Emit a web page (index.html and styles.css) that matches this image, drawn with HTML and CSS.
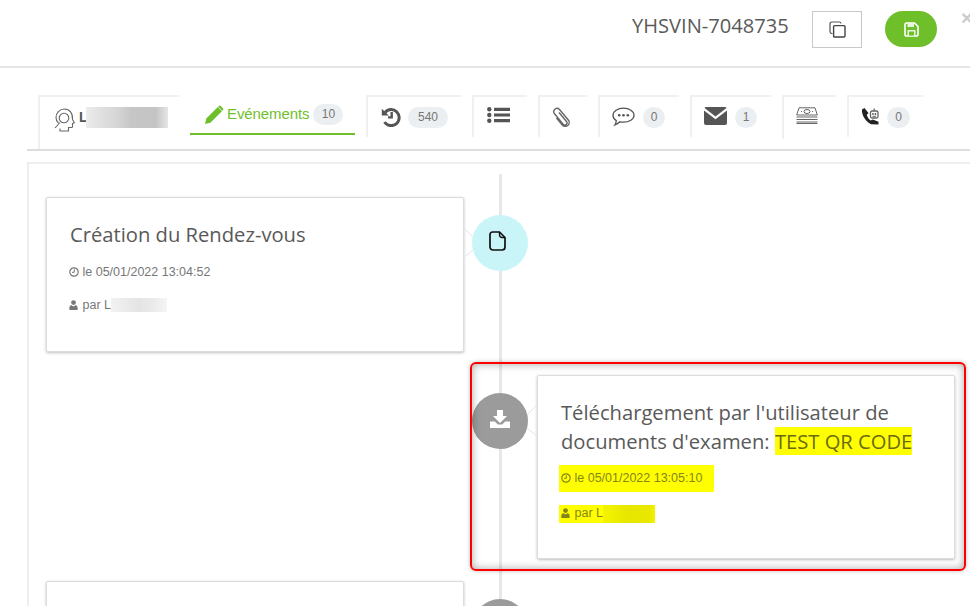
FILE: index.html
```html
<!DOCTYPE html>
<html lang="fr">
<head>
<meta charset="utf-8">
<title>YHSVIN-7048735</title>
<link rel="stylesheet" href="styles.css">
</head>
<body>
<header class="top">
  <span class="ref">YHSVIN-7048735</span>
  <button class="copy" aria-label="Copier"><svg width="17" height="17" viewBox="0 0 17 17"><path d="M3.500 12.500H2.800A1.800 1.800 0 0 1 1 10.700V2.800A1.800 1.800 0 0 1 2.800 1h7.400A1.800 1.800 0 0 1 12 2.500" fill="none" stroke="#555" stroke-width="1.200"/><rect x="4.600" y="4.600" width="11.400" height="11.400" rx="1" fill="#fff" stroke="#444" stroke-width="1.400"/></svg></button>
  <button class="save" aria-label="Enregistrer"><svg width="15" height="15" viewBox="0 0 15 15"><path d="M1 2.500A1.500 1.500 0 0 1 2.500 1h8L14 4.500v8a1.500 1.500 0 0 1-1.500 1.500h-10A1.500 1.500 0 0 1 1 12.500z" fill="none" stroke="#fff" stroke-width="1.600"/><path d="M3.500 1.500h6.500v3.500H3.500zM3.500 8h8v5.500h-8z" fill="#fff" fill-opacity=".85"/><path d="M5 9.500h5v4H5z" fill="#6fbf2b"/></svg></button>
  <span class="close">×</span>
</header>

<nav class="tabs">
  <div class="tab t-user">
    <svg class="i-user" width="22" height="24" viewBox="0 0 22 24" fill="none" stroke="#666" stroke-width="1.100"><path d="M6 20.500v2.500h8.500v-3.500h3a1 1 0 0 0 1-1v-3l1.800-.8-1.800-3.200C19 5 15.500 1 10.500 1 5.500 1 2 5 2 9.500c0 2.300 1 4.300 2.500 5.500"/><circle cx="10" cy="10" r="4.800"/><path d="M6 14.500 1 20"/></svg>
    <b class="uname">L</b><span class="blur blur-name"></span>
  </div>
  <div class="tab t-events">
    <svg width="20" height="20" viewBox="0 0 20 20"><path d="M1 19l1.300-5.400L13.800 2.100l4.100 4.100L6.400 17.700zM14.800 1.100a1.400 1.400 0 0 1 2 0l2.100 2.100a1.400 1.400 0 0 1 0 2l-.6.600-4.100-4.100z" fill="#6fbf2b"/></svg>
    <span class="tab-label">Evénements</span><span class="badge b-ev">10</span>
  </div>
  <div class="tab t-hist">
    <svg width="20" height="20" viewBox="0 0 20 20"><path d="M4 5.500A8 8 0 1 1 3.500 15" fill="none" stroke="#555" stroke-width="3"/><path d="M.8 1.800 7.800 8.500H.8zM9.500 5h2.400v6.500H7v-2.300h2.500z" fill="#555"/></svg>
    <span class="badge b-hist">540</span>
  </div>
  <div class="tab t-list">
    <svg width="23" height="16" viewBox="0 0 23 16" fill="#555"><circle cx="2.300" cy="2.300" r="2.200"/><circle cx="2.300" cy="8" r="2.200"/><circle cx="2.300" cy="13.700" r="2.200"/><path d="M7 .8h16v3.200H7zM7 6.400h16v3.200H7zM7 12h16v3.200H7z"/></svg>
  </div>
  <div class="tab t-clip">
    <svg width="19" height="20" viewBox="0 0 19 20" fill="none" stroke="#666" stroke-width="1.400"><path d="M7 5.500l7.500 9a2.200 2.200 0 0 1-3.400 2.800L2.500 6.800A3.300 3.300 0 0 1 7.500 2.500l8.800 10.500a3.900 3.900 0 0 1-6 5L4.500 11"/></svg>
  </div>
  <div class="tab t-chat">
    <svg width="23" height="20" viewBox="0 0 23 20"><path d="M11.500 1.200c5.700 0 10.500 3 10.500 7s-4.800 7-10.500 7c-1.300 0-2.600-.1-3.700-.4-1.200 1.300-2.800 2.400-5 3.200.9-1.300 1.500-2.600 1.500-4.400C2.300 12.400 1 10.400 1 8.200c0-4 4.800-7 10.500-7z" fill="none" stroke="#555" stroke-width="1.300"/><circle cx="7.200" cy="8.200" r="1.300" fill="#555"/><circle cx="11.500" cy="8.200" r="1.300" fill="#555"/><circle cx="15.800" cy="8.200" r="1.300" fill="#555"/></svg>
    <span class="badge b-round">0</span>
  </div>
  <div class="tab t-mail">
    <svg width="23" height="18" viewBox="0 0 23 18" fill="#555"><path d="M2 0h19a2 2 0 0 1 1.500 1L11.500 9.500.5 1A2 2 0 0 1 2 0zM0 3.500l11.500 8.700L23 3.500V16a2 2 0 0 1-2 2H2a2 2 0 0 1-2-2z"/></svg>
    <span class="badge b-round">1</span>
  </div>
  <div class="tab t-money">
    <svg width="22" height="17" viewBox="0 0 22 17" fill="none" stroke="#666"><path d="M3 .8h16l2.300 7.200H.7z"/><ellipse cx="11" cy="4.500" rx="3" ry="2"/><path d="M.500 10h21M.500 12.500h21M.500 15h21M.500 16.500h21"/><path d="M5 4.500h1M16 4.500h1"/></svg>
  </div>
  <div class="tab t-phone">
    <svg width="19" height="18" viewBox="0 0 19 18"><path d="M3.500 1 1 2.500C.3 7.500 4.500 14.500 10 17.200l7.500.3v-2.800l-5.700-2.200-2 1C8 12.500 6 9.500 5.800 7.500l1.800-1.300z" fill="#222"/><rect x="9.500" y="4" width="7.500" height="7" rx="1.500" fill="none" stroke="#666" stroke-width="1.300"/><circle cx="12" cy="7" r=".9" fill="#555"/><circle cx="14.500" cy="7" r=".9" fill="#555"/><path d="M13.200 1.500V4" stroke="#666" stroke-width="1.300"/><path d="M11.500 9.300h3.500" stroke="#666"/></svg>
    <span class="badge b-round">0</span>
  </div>
</nav>

<main class="timeline">
  <article class="event">
    <section class="card">
      <h2 class="title">Création du Rendez-vous</h2>
      <p class="meta m-date"><svg class="mi" width="10" height="10" viewBox="0 0 10 10" fill="none" stroke="currentColor"><circle cx="5" cy="5" r="4.200" stroke-width="1.200"/><path d="M5.300 2.300v3H3"/></svg> le 05/01/2022 13:04:52</p>
      <p class="meta m-by"><svg class="mi" width="9" height="10" viewBox="0 0 9 10" fill="currentColor"><circle cx="4.500" cy="2.600" r="2.400"/><path d="M.2 9.100C.2 6.500 1.200 5.300 2.300 5a3 3 0 0 0 4.400 0c1.100.3 2.100 1.500 2.100 4.100 0 .6-.4.900-.9.900H1.100C.6 10 .2 9.700.2 9.100z"/></svg> par L<span class="blur blur-by"></span></p>
    </section>
    <div class="node node-file">
      <svg class="notch notch-l" width="10" height="32" viewBox="0 0 10 32" fill="none" stroke="#e4e4e4"><path d="M0 0l10 10M0 31l10-8"/></svg>
      <svg class="ico-file" width="17" height="20" viewBox="0 0 17 20" fill="none" stroke="#111" stroke-width="1.700"><path d="M3.500 1H10.500L16 6.500V16a3 3 0 0 1-3 3H4a3 3 0 0 1-3-3V3.500A2.500 2.500 0 0 1 3.500 1z"/><path d="M10.500 1v3a2.500 2.500 0 0 0 2.500 2.500h3" stroke-width="1.400"/></svg>
    </div>
  </article>

  <article class="event">
    <div class="spacer"></div>
    <div class="node node-dl">
      <svg class="notch notch-r" width="10" height="32" viewBox="0 0 10 32" fill="none" stroke="#e4e4e4"><path d="M10 0 0 10M10 31 0 23"/></svg>
      <svg class="ico-dl" width="20" height="18" viewBox="0 0 20 18" fill="#fff"><path d="M7 0h6v6h4l-7 7-7-7h4z"/><path d="M0 11.500h4.800l3 3h4.400l3-3H20V18H0z"/></svg>
    </div>
    <section class="card card-tall">
      <h2 class="title">Téléchargement par l'utilisateur de documents d'examen: <mark class="hl">TEST QR CODE</mark></h2>
      <p class="meta m-date2 on-yellow"><svg class="mi" width="10" height="10" viewBox="0 0 10 10" fill="none" stroke="currentColor"><circle cx="5" cy="5" r="4.200" stroke-width="1.200"/><path d="M5.300 2.300v3H3"/></svg> le 05/01/2022 13:05:10</p>
      <p class="meta m-by2 on-yellow"><svg class="mi" width="9" height="10" viewBox="0 0 9 10" fill="currentColor"><circle cx="4.500" cy="2.600" r="2.400"/><path d="M.2 9.100C.2 6.500 1.200 5.300 2.300 5a3 3 0 0 0 4.400 0c1.100.3 2.100 1.500 2.100 4.100 0 .6-.4.900-.9.900H1.100C.6 10 .2 9.700.2 9.100z"/></svg> par L<span class="blur blur-by2"></span></p>
    </section>
  </article>

  <article class="event">
    <section class="card card-next"></section>
    <div class="node node-dl"></div>
  </article>
</main>

<div class="redbox"></div>
</body>
</html>
```
FILE: styles.css
```css
* { box-sizing: border-box; }
html, body { margin: 0; height: 606px; overflow: hidden; background: #fff; }
body { position: relative; font-family: "Liberation Sans", Arial, sans-serif; color: #666; }

.top { height: 68px; border-bottom: 2px solid #e5e5e5; display: flex; align-items: flex-start; padding: 11px 0 0 632px; overflow: hidden; }
.ref { flex: none; font: 20.1px/30px "Open Sans", sans-serif; color: #5a5a5a; width: 180px; }
.copy { flex: none; width: 50px; height: 37px; border: 1px solid #c8c8c8; background: #fff; padding: 0; display: flex; align-items: center; justify-content: center; }
.save { flex: none; width: 52px; height: 36px; margin-left: 23px; border: 0; border-radius: 18px; background: #6fbf2b; padding: 0; display: flex; align-items: center; justify-content: center; }
.close { flex: none; font: bold 20px/14px "Liberation Sans", sans-serif; color: #ccc; margin-left: 24px; }

.tabs { height: 83px; margin-left: 27px; padding: 27px 0 0 11px; display: flex; gap: 11px; align-items: flex-start; border-bottom: 2px solid #dedede; }
.tab { height: 42px; border-top: 2px solid #f0f0f0; border-left: 2px solid #f0f0f0; display: flex; align-items: flex-start; padding-top: 10px; padding-left: 12px; flex: none; font-size: 12px; }
.t-user { width: 141px; height: 54px; padding-left: 14px; }
.t-events { width: 165px; height: 40px; border: 0; border-bottom: 2px solid #6fbf2b; padding-left: 14px; padding-top: 10px; }
.t-hist { width: 95px; padding-left: 13px; }
.t-list { width: 55px; padding-left: 13px; }
.t-clip { width: 49px; }
.t-chat { width: 81px; }
.t-mail { width: 81px; }
.t-money { width: 54px; height: 44px; }
.t-phone { width: 76px; }
.i-user { margin-top: 1px; flex: none; }
.uname { font-size: 14px; line-height: 20px; color: #555; margin-left: 3px; }
.blur { display: inline-block; background: linear-gradient(90deg, #ececec, #dcdcdc 25%, #d8d8d8 35%, #c6c6c6 55%, #c4c4c4 85%, #e6e6e6); }
.blur-name { width: 82px; height: 21px; margin-left: -2px; }
.tab-label { font-size: 15px; line-height: 17px; color: #6fbf2b; margin-left: 3px; letter-spacing: -.1px; }
.badge { height: 21px; border-radius: 11px; background: #eceff1; color: #777; font-size: 12px; line-height: 21px; text-align: center; margin-left: 8px; }
.b-ev { width: 30px; margin-left: 4px; margin-top: -1px; }
.b-hist { width: 40px; margin-left: 7px; }
.b-round { width: 22px; }
.t-phone .b-round { width: 23px; margin-left: 7px; }

.timeline { position: relative; height: 444px; margin: 11px 0 0 27px; padding: 33px 0 0 17px; border-top: 2px solid #eee; border-left: 2px solid #eee; display: flex; flex-direction: column; gap: 23px; overflow: hidden; }
.timeline::before { content: ""; position: absolute; left: 470px; top: 10px; bottom: 0; width: 3px; background: #e8e8e8; }
.event { position: relative; display: grid; grid-template-columns: 418px 56px 419px; column-gap: 8px; align-items: start; flex: none; }
.card { width: 418px; height: 155px; background: #fff; border: 1px solid #dcdcdc; border-radius: 2px; box-shadow: 0 1px 3px rgba(0,0,0,.25); padding: 22px 23px; }
.card-tall { height: 184px; margin-bottom: -1px; justify-self: end; }
.card-next { height: 80px; }
.spacer { height: 1px; }
.title { margin: 0; font: 400 20.2px/29px "Open Sans", sans-serif; color: #595959; }
.hl { background: #ffff00; color: #6a6a10; padding: 0; }
.meta { margin: 0; font-size: 12.5px; line-height: 18px; color: #777; }
.mi { vertical-align: -1px; }
.m-by .mi, .m-by2 .mi { margin-right: 1px; }
.m-date { margin: 14px 0 0 -1px; }
.m-by { margin: 15px 0 0 -1px; }
.on-yellow { background: #ffff00; color: #85851a; white-space: nowrap; overflow: hidden; }
.m-date2 { width: 155px; height: 27px; margin: 9px 0 0 -2px; padding: 4px 0 0 2px; }
.m-by2 { width: 96px; height: 18px; margin: 13px 0 0 -2px; padding: 0 0 0 2px; line-height: 16px; }
.blur-by { width: 56px; height: 14px; vertical-align: -3px; background: linear-gradient(90deg, #f2f2f2, #e4e4e4 50%, #ececec 80%, #f6f6f6); }
.blur-by2 { width: 54px; height: 18px; vertical-align: -6px; background: linear-gradient(90deg, #f4f400, #e6e600 50%, #e8e800 85%, #f6f600); }

.node { position: relative; width: 56px; height: 56px; margin-top: 18px; border-radius: 50%; display: flex; align-items: center; justify-content: center; }
.node-file { background: #c9f5f9; }
.node-dl { background: #9b9b9b; }
.ico-file { margin: 0 5px 5px 0; }
.ico-dl { margin-bottom: 4px; }
.notch { position: absolute; top: 12px; }
.notch-l { left: -9px; }
.notch-r { right: -9px; }

.redbox { position: absolute; left: 470px; top: 362px; width: 496px; height: 209px; border: 2px solid #f00; border-radius: 6px; box-shadow: inset 0 0 9px rgba(0,0,0,.35), 0 0 4px rgba(0,0,0,.25); pointer-events: none; }
```
